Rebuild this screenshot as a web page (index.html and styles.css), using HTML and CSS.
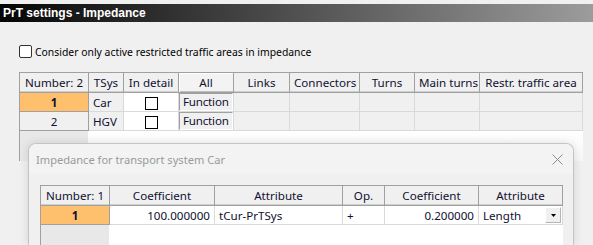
FILE: index.html
```html
<!DOCTYPE html>
<html lang="en">
<head>
    <meta charset="UTF-8">
    <title>PrT settings - Impedance</title>
    <link rel="stylesheet" href="styles.css">
</head>
<body>
    <div class="title-bar">PrT settings - Impedance</div>

    <label class="option">
        <span class="check"></span>
        <span>Consider only active restricted traffic areas in impedance</span>
    </label>

    <div class="grid-wrap main-grid">
        <table class="grid">
            <colgroup>
                <col style="width:69px"><col style="width:35px"><col style="width:55px">
                <col style="width:55px"><col style="width:56px"><col style="width:70px">
                <col style="width:55px"><col style="width:65px"><col style="width:103px">
            </colgroup>
            <thead>
                <tr>
                    <th>Number: 2</th>
                    <th>TSys</th>
                    <th>In detail</th>
                    <th class="raised">All</th>
                    <th>Links</th>
                    <th>Connectors</th>
                    <th>Turns</th>
                    <th>Main turns</th>
                    <th>Restr. traffic area</th>
                </tr>
            </thead>
            <tbody>
                <tr>
                    <td class="num selected">1</td>
                    <td class="ro">Car</td>
                    <td class="edit center"><span class="box"></span></td>
                    <td class="btn-cell"><span class="btn">Function</span></td>
                    <td class="ro"></td><td class="ro"></td><td class="ro"></td><td class="ro"></td><td class="ro"></td>
                </tr>
                <tr>
                    <td class="num">2</td>
                    <td class="ro">HGV</td>
                    <td class="edit center"><span class="box"></span></td>
                    <td class="btn-cell"><span class="btn">Function</span></td>
                    <td class="ro"></td><td class="ro"></td><td class="ro"></td><td class="ro"></td><td class="ro"></td>
                </tr>
            </tbody>
        </table>
        <div class="grid-rest"><div class="rest-fixed"></div><div class="rest-free"></div></div>
    </div>

    <div class="dialog">
        <div class="dialog-head">
            <span>Impedance for transport system Car</span>
            <svg class="close" width="11" height="11" viewBox="0 0 11 11">
                <path d="M0.5 0.5 L10.5 10.5 M10.5 0.5 L0.5 10.5" stroke="#8c8c8c" stroke-width="1" fill="none"/>
            </svg>
        </div>
        <div class="dialog-body">
            <div class="grid-wrap inner-grid">
                <table class="grid">
                    <colgroup>
                        <col style="width:69px"><col style="width:105px"><col style="width:128px">
                        <col style="width:42px"><col style="width:94px"><col style="width:84px">
                    </colgroup>
                    <thead>
                        <tr>
                            <th>Number: 1</th>
                            <th>Coefficient</th>
                            <th>Attribute</th>
                            <th>Op.</th>
                            <th>Coefficient</th>
                            <th>Attribute</th>
                        </tr>
                    </thead>
                    <tbody>
                        <tr>
                            <td class="num selected">1</td>
                            <td class="edit right">100.000000</td>
                            <td class="edit">tCur-PrTSys</td>
                            <td class="edit">+</td>
                            <td class="edit right">0.200000</td>
                            <td class="edit combo">Length<span class="drop"><svg width="5" height="3" viewBox="0 0 5 3"><path d="M0 0 H5 L2.5 3 Z" fill="#000"/></svg></span></td>
                        </tr>
                    </tbody>
                </table>
                <div class="grid-rest"><div class="rest-fixed"></div><div class="rest-free white"></div></div>
            </div>
        </div>
    </div>
</body>
</html>
```
FILE: styles.css
```css
* {
    margin: 0;
    padding: 0;
    box-sizing: border-box;
}

body {
    font-family: "Noto Sans", "Open Sans", sans-serif;
    font-size: 12px;
    background: #f0f0f0;
    color: #000;
    width: 593px;
    height: 245px;
    overflow: hidden;
    position: relative;
}

.title-bar {
    margin-top: 4px;
    height: 18px;
    line-height: 18px;
    padding-left: 3px;
    background: linear-gradient(to right, #050505, #9c9c9c);
    color: #fff;
    font-family: "Liberation Sans", sans-serif;
    font-weight: bold;
    font-size: 12px;
}

.option {
    display: flex;
    align-items: center;
    gap: 3px;
    margin: 23px 0 0 19px;
    height: 13px;
    font-size: 10.4px;
}

.check {
    width: 13px;
    height: 13px;
    border: 1px solid #333;
    border-radius: 2px;
    background: #fff;
}

.main-grid {
    margin: 14px 0 0 19px;
    width: 564px;
}

.grid-wrap {
    display: flex;
    flex-direction: column;
}

.grid {
    border-collapse: collapse;
    table-layout: fixed;
    width: 100%;
    font-size: 11.6px;
}

.grid th,
.grid td {
    white-space: nowrap;
    overflow: hidden;
    padding: 0 4px;
    color: #101030;
}

.grid th {
    height: 20px;
    font-weight: normal;
    background: #f0f0f0;
    border: 1px solid #a0a0a0;
    text-align: center;
    box-shadow: inset 0 -1px 0 #cfcfcf;
}

.grid th.raised {
    background: #f3f3f3;
    box-shadow: inset 1px 1px 0 #fff, inset 0 -1px 0 #bdbdbd;
}

.grid td {
    height: 19px;
    border: 1px solid #d9d9d9;
}

.grid td.num {
    text-align: center;
    background: #f0f0f0;
    border-color: #a0a0a0;
}

.grid td.selected {
    background: #ffc06e;
    font-weight: bold;
}

.grid td.ro {
    background: #f0f0f0;
}

.grid td.edit {
    background: #fff;
}

.center {
    text-align: center;
}

.right {
    text-align: right;
}

.box {
    display: inline-block;
    width: 13px;
    height: 13px;
    border: 1px solid #000;
    background: #fff;
    vertical-align: middle;
}

.grid td.btn-cell {
    padding: 0;
    background: #f0f0f0;
}

.btn {
    display: block;
    height: 18px;
    line-height: 16px;
    padding-left: 3px;
    background: #f0f0f0;
    border-top: 1px solid #a0a0a0;
    border-left: 1px solid #a0a0a0;
    border-right: 1px solid #fff;
    border-bottom: 1px solid #fff;
    letter-spacing: -0.2px;
}

.grid-rest {
    display: flex;
    height: 30px;
    border-left: 1px solid #a0a0a0;
}

.rest-fixed {
    width: 68px;
    background: #e8e8e8;
}

.rest-free {
    flex: 1;
    background: linear-gradient(#ffffff, #f6f6f6);
}

.rest-free.white {
    background: #fff;
}

.dialog {
    position: absolute;
    left: 28px;
    top: 143px;
    width: 546px;
    height: 102px;
    border: 1px solid #c4c4c4;
    border-bottom: none;
    border-radius: 8px 8px 0 0;
    background: #f0f0f0;
    box-shadow: 0 0 10px rgba(0, 0, 0, 0.12);
    overflow: hidden;
}

.dialog-head {
    height: 30px;
    display: flex;
    align-items: center;
    justify-content: space-between;
    padding: 0 10px 0 7px;
    background: #f3f3f3;
    color: #9a9a9a;
    font-size: 11.1px;
}

.close {
    margin-top: 1px;
}

.dialog-body {
    padding: 11px 0 0 11px;
}

.inner-grid {
    width: 523px;
}

.inner-grid .grid-rest {
    height: 40px;
}

.grid td.combo {
    position: relative;
    padding-right: 20px;
}

.drop {
    position: absolute;
    right: 1px;
    top: 1px;
    width: 16px;
    height: 16px;
    display: flex;
    align-items: center;
    justify-content: center;
    background: #f0f0f0;
    border: 1px solid #b4b4b4;
    border-top-color: #fff;
    border-left-color: #fff;
}
```
